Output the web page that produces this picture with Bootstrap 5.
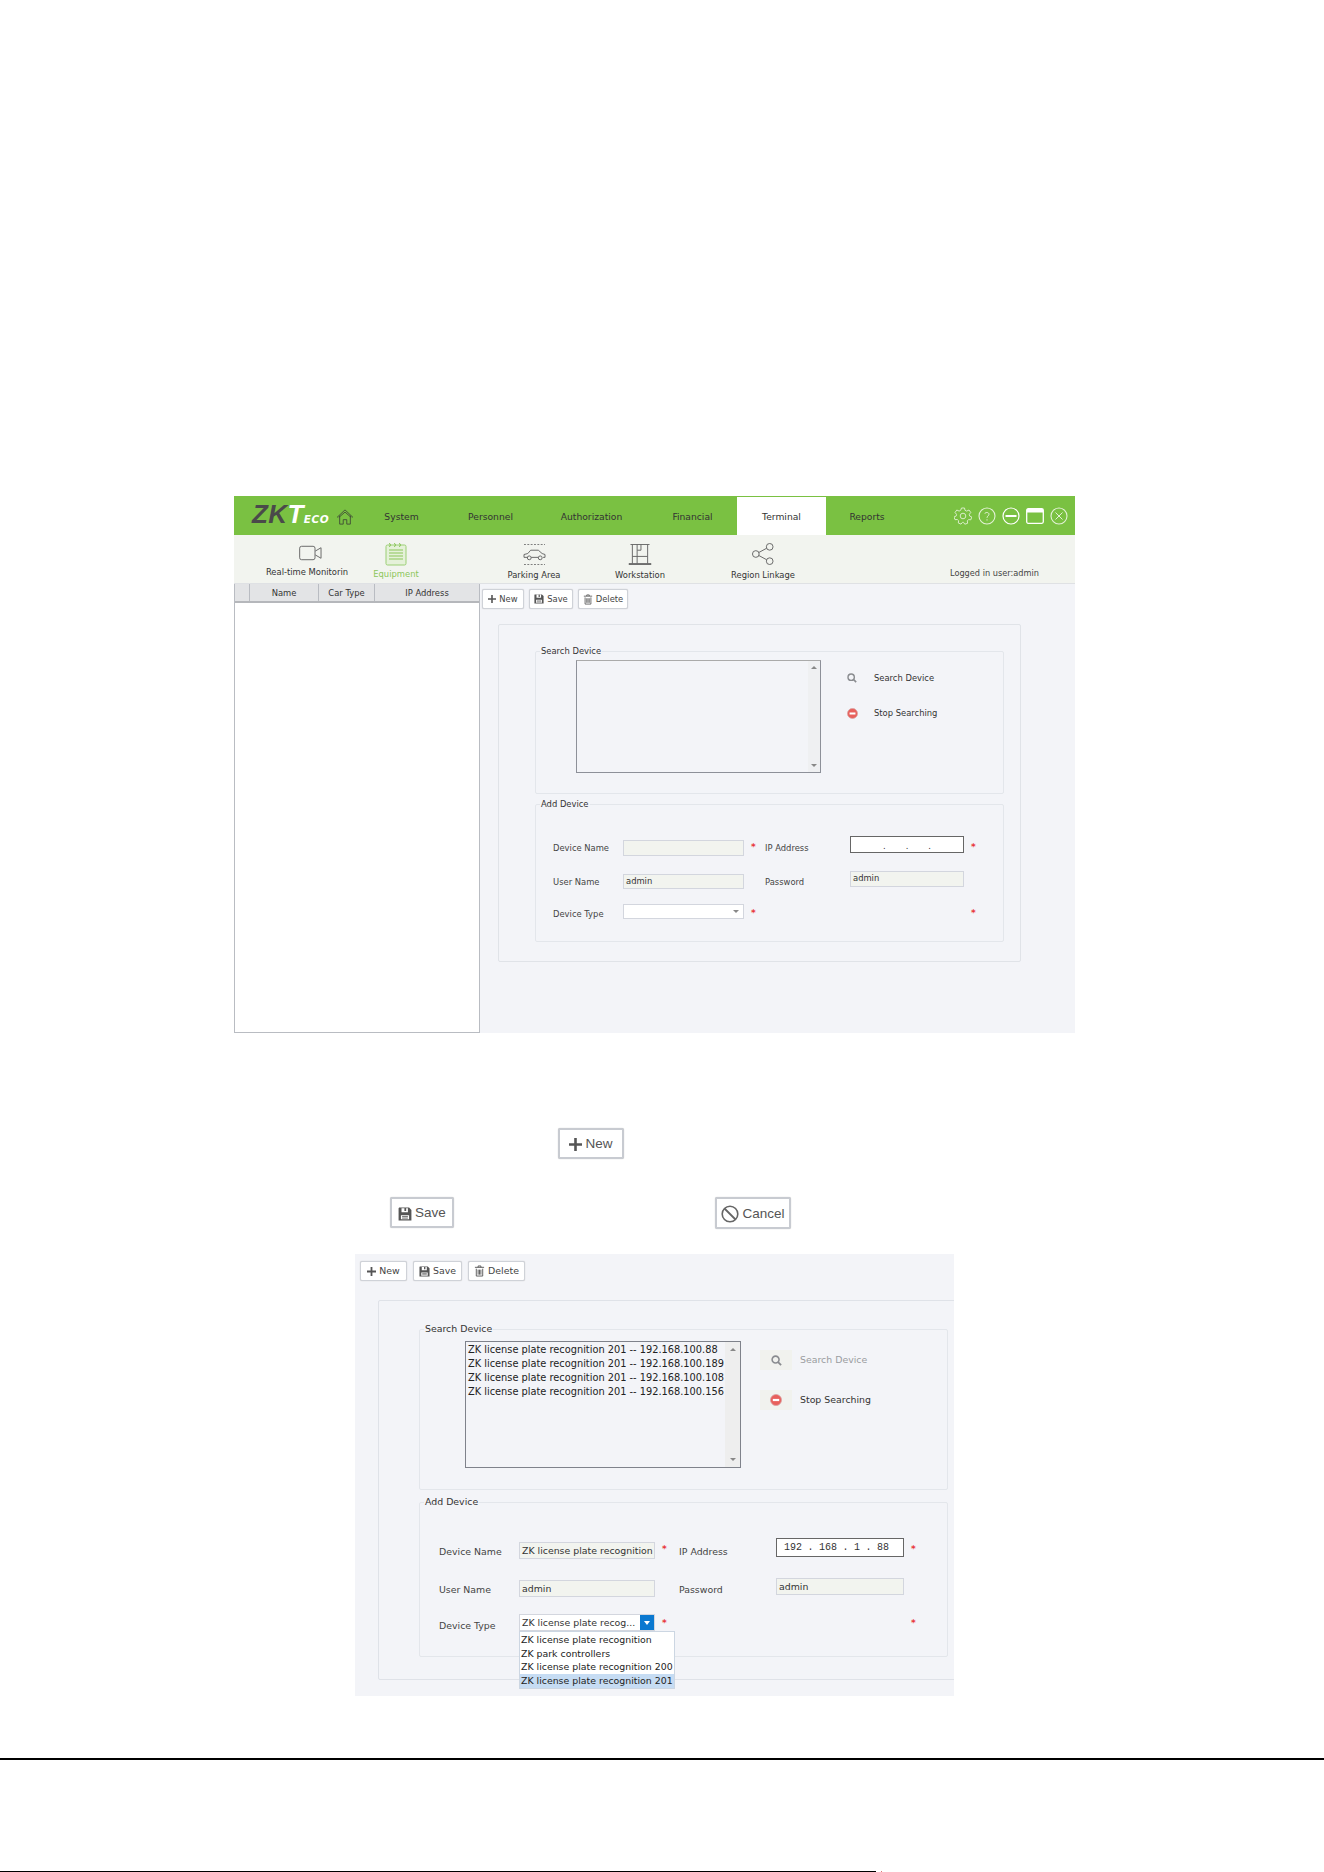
<!DOCTYPE html>
<html lang="en">
<head>
<meta charset="utf-8">
<title>Add device</title>
<link href="https://cdn.jsdelivr.net/npm/bootstrap@5.3.0/dist/css/bootstrap.min.css" rel="stylesheet">
<style>
body{background:#fff;font-family:"DejaVu Sans","Liberation Sans",sans-serif;color:#333;width:1324px;height:1872px;overflow:hidden;margin:0;padding-top:496px;position:relative}
.shot-a{margin-left:234px;width:841px;height:537px;font-size:8.4px;line-height:12px;background:#f3f4f8}
.top-green{height:39px;background:#7ac142}
.logo-wrap{width:123px;padding-left:18px;padding-top:2px;align-items:center;gap:7px}
.logo-txt{font-family:"Liberation Sans",sans-serif;font-weight:700;font-style:italic;font-size:26px;line-height:26px;letter-spacing:.4px;color:#4a4a4a;white-space:nowrap}
.logo-txt i{color:#fff;font-style:italic}
.logo-txt b{color:#fff;font-family:"DejaVu Sans",sans-serif;font-size:10.5px;letter-spacing:.6px;text-transform:uppercase}
.nav-tab{display:flex;align-items:center;justify-content:center;height:39px;color:#333;font-size:9.2px;width:89px;padding-top:2px}
.nav-tab.tab-wide{width:113px}
.nav-tab.tab-short{width:82px}
.nav-tab.tab-on{background:#fff;margin-top:1px;height:38px;padding-top:1px}
.win-icons{margin-left:46px;gap:6px}
.tool-strip{height:49px;background:#f2f4ef;border-bottom:1px solid #dfe1e4;padding-left:30px}
.tool-item{display:flex;flex-direction:column;align-items:center;padding-top:6px;color:#333}
.tool-item span{white-space:nowrap}
.ti1{width:92px}.ti1 span{margin-top:5px;margin-right:6px}
.ti2{width:80px;color:#8cc65a;padding-top:7px}.ti2 span{margin-top:2px}
.ti3{width:100px;margin-left:48px;padding-top:9px}.ti3 span{margin-top:4px}
.ti4{width:100px;margin-left:6px;padding-top:9px}.ti4 span{margin-top:4px}
.ti5{width:100px;margin-left:23px;padding-top:8px}.ti5 span{margin-top:4px}
.logged{margin-left:137px;padding-top:32px;color:#444;font-size:8.2px;white-space:nowrap}
.pane-left{width:246px;height:449px;background:#fff;border:1px solid #b9bcc2;border-top:0}
.grid-head{height:19px;background:#e3e4e6;border-bottom:2px solid #b5b7bb;text-align:center;line-height:18px}
.grid-head div{border-right:1px solid #b9bcc2}
.gh0{width:15px}.gh1{width:69px}.gh2{width:56px}.gh3{flex:1;border-right:0!important}
.tool-btn{--bs-btn-padding-x:0;--bs-btn-padding-y:0;--bs-btn-border-radius:2px;--bs-btn-font-size:8.4px;background:#fff;border:1px solid #cfd2d8;color:#444;display:inline-flex;align-items:center;justify-content:center;gap:3px;box-shadow:0 0 1px #bbb}
.row-a{padding:5px 0 0 2px;gap:5px}
.b-new-a{width:42px;height:20px}.b-save-a{width:44px;height:20px}.b-del-a{width:50px;height:20px}
.box-a{margin:15px 0 0 18px;width:523px;height:338px;border:1px solid #e0e3e8;border-radius:2px;padding:20px 0 0 36px}
.fs{border:1px solid #e3e6eb;border-radius:2px;margin:0;padding:0;min-width:0}
.fs legend{float:none;width:auto;margin:0 0 0 4px;padding:0 1px;color:#333}
.fs-a{width:469px}.fs-a legend{font-size:8.4px;line-height:12px}
.fs-a1-in{padding:3px 0 20px 40px}
.fs-a2{margin-top:4px;height:144px}
.list-a{width:245px;height:113px;background:#f3f4f8;border:1px solid #8d9099;border-top-color:#aaa}
.sbar{background:#eeeeee;display:flex;flex-direction:column;justify-content:space-between;align-items:center;padding:6px 0}
.sbar-a{width:12px;margin-left:auto;padding:5px 0;background:#eff0f2}
.tri-up{width:0;height:0;border:3px solid transparent;border-top:0;border-bottom:3px solid #888}
.tri-dn{width:0;height:0;border:3px solid transparent;border-bottom:0;border-top:3px solid #888}
.acts-a{margin-left:26px;padding-top:9px}
.act{display:flex;align-items:center}
.act-a1{height:18px;gap:17px;white-space:nowrap}
.act-a2{height:18px;margin-top:17px;gap:16px;white-space:nowrap}
.frm{display:grid;align-items:start}
.frm-a{grid-template-columns:70px 121px 21px 85px 114px 20px;grid-template-rows:35px 33px 24px;margin:26px 0 0 17px}
.fld{background:#f2f4ef;border:1px solid #d3d6de;padding-left:2px;overflow:hidden;white-space:nowrap}
.fa-lbl{color:#444;line-height:12px}
.fa-n{height:16px}.fa-u{height:15px}.fa-p{height:16px}
.fa-ip{height:17px;background:#fff;border:1px solid #666;display:flex;justify-content:space-around;padding:0 22px;color:#333;align-items:flex-end;line-height:12px}
.fa-sel{height:15px;background:#fff;border:1px solid #d3d6de;display:flex;justify-content:flex-end;align-items:center;padding-right:4px}
.req{color:#e8363a;font-size:9px;font-weight:700;line-height:12px}
.req-a{margin-left:7px}
.o2{margin-top:2px}.o3{margin-top:3px}.o4{margin-top:4px}.o5{margin-top:5px}.o6{margin-top:6px}.o7{margin-top:7px}

.row-new{margin:95px 0 0 558px}
.b-big{--bs-btn-font-size:13.500px;color:#555;gap:3px;font-family:"Liberation Sans",sans-serif;border-color:#c8cbd1;border-width:2px;height:31px;padding-top:2px}
.b-n{width:66px}.b-s{width:64px}.b-c{width:76px;height:32px;margin-left:261px}
.row-save{margin:38px 0 0 390px}

.shot-b{margin:25px 0 0 355px;width:599px;height:442px;background:#f3f4f8;font-size:9.4px;line-height:14px;overflow:hidden;position:relative;color:#333}
.row-b{padding:7px 0 0 5px;gap:6px}
.tool-btn.fb{--bs-btn-font-size:9.4px;height:20px}
.b-new-b{width:47px}.b-save-b{width:49px}.b-del-b{width:57px}
.box-b{margin:19px 0 0 23px;width:640px;height:380px;border:1px solid #dfe2e8;border-radius:2px;padding:21px 0 0 40px}
.fs-b{width:529px}.fs-b legend{font-size:9.4px;line-height:14px}
.fs-b1-in{padding:5px 0 21px 45px}
.fs-b2{margin-top:5px;height:162px}
.list-b{width:276px;height:127px;border:1px solid #7f828b;background:#f3f4f8}
.list-lines{padding:1px 0 0 2px;font-size:9.800px;line-height:14px;color:#222;white-space:nowrap;flex:1;overflow:hidden}
.sbar-b{width:15px;padding:6px 0;flex:none}
.acts-b{margin-left:19px;padding-top:9px}
.act-b1{height:20px;color:#9a9ca0;white-space:nowrap}
.act-b2{height:20px;margin-top:20px;white-space:nowrap}
.ico-box{width:32px;height:20px;background:#f1f2ee;display:flex;align-items:center;justify-content:center;margin-right:8px}
.frm-b{grid-template-columns:80px 136px 24px 97px 128px 20px;grid-template-rows:40px 36px 24px;margin:29px 0 0 19px}
.fb-lbl{color:#444}
.fb-in{height:17px;line-height:15px;font-size:9.4px;padding-left:2px}
.fb-ip{height:19px;background:#fff;border:1px solid #666;display:flex;justify-content:space-between;align-items:center;padding:0 14px 0 7px;font-family:"Liberation Mono",monospace;font-size:10px}
.fb-sel{height:17px;background:#fff;border:1px solid #d3d6de;display:flex;align-items:center;padding-left:2px;white-space:nowrap}
.fb-sel span{flex:1;overflow:hidden}
.sel-arrow{width:14px;height:100%;background:#0a78d0;display:flex;align-items:center;justify-content:center;flex:none}
.tri-w{width:0;height:0;border:3px solid transparent;border-bottom:0;border-top:4px solid #fff}
.drop-b{position:absolute;left:164px;top:377px;width:156px;height:58px;background:#fff;border:1px solid #ccd6e2;line-height:13.7px;white-space:nowrap;color:#222;padding-top:1px}
.drop-b div{padding-left:1px;height:13.7px}
.drop-b .drop-on{background:#c6dcf3}
.rule-1{height:2px;background:#000;margin-top:62px;opacity:1;border:0}
.rule-2{position:absolute;left:0;top:1871px;width:876px;height:1px;background:#000}
.dot-red{position:absolute;left:881px;top:1871px;width:1px;height:1px;background:#d77}
svg{display:block;flex:none}
</style>
</head>
<body>
<svg width="0" height="0" class="position-absolute">
<defs>
<symbol id="i-plus" viewBox="0 0 10 10"><path d="M4 0h2v4h4v2H6v4H4V6H0V4h4z" fill="#555"/></symbol>
<symbol id="i-save" viewBox="0 0 12 12"><path d="M1 .5h8.500l2 2V11.500H.5V1z M3 1v3.500h5.500V1H7v2.500H5.500V1z M2.500 7v3.500h7V7z" fill="#555" fill-rule="evenodd"/><path d="M3.500 8.200h5M3.500 9.500h5" stroke="#555" stroke-width=".7"/></symbol>
<symbol id="i-trash" viewBox="0 0 12 13"><path d="M1 2.500h10M4.500 2.500V1h3v1.500M2.500 4v8h7V4M4.500 5v5.500M6 5v5.500M7.500 5v5.500" fill="none" stroke="#555"/></symbol>
<symbol id="i-search" viewBox="0 0 12 12"><circle cx="5" cy="5" r="3.800" fill="none" stroke="#8a8c90" stroke-width="1.700"/><path d="M7.500 7.500l3.500 3.500" stroke="#8a8c90" stroke-width="2"/></symbol>
<symbol id="i-stop" viewBox="0 0 12 12"><circle cx="6" cy="6" r="5.500" fill="#e8605c" stroke="#d9a0a0" stroke-width=".8"/><rect x="2.800" y="4.900" width="6.400" height="2.200" fill="#fff"/></symbol>
<symbol id="i-ban" viewBox="0 0 18 18"><circle cx="9" cy="9" r="7.800" fill="none" stroke="#666" stroke-width="1.600"/><path d="M3.500 3.500l11 11" stroke="#666" stroke-width="1.800"/></symbol>
<symbol id="i-home" viewBox="0 0 20 18"><path d="M1 9.500L10 1l9 8.500M4 7.500V17h4v-5h4v5h4V7.500M3 9.500L10 3.500l7 6" fill="none" stroke="#3f4a36" stroke-width="1"/></symbol>
<symbol id="i-cam" viewBox="0 0 24 16"><rect x=".7" y="1" width="16" height="14" rx="2" fill="none" stroke="#666" stroke-width="1"/><path d="M17 6l6-3.500v11L17 10" fill="none" stroke="#666"/></symbol>
<symbol id="i-note" viewBox="0 0 22 24"><rect x="1" y="3" width="20" height="20" rx="1.500" fill="#e5f1d9" stroke="#9bcf74"/><path d="M4 1.500a1.500 1.500 0 1 1 0 3M9 1.500a1.500 1.500 0 1 1 0 3M14 1.500a1.500 1.500 0 1 1 0 3" fill="none" stroke="#8cc65a"/><path d="M4 8h14M4 11h14M4 14h14M4 17h14" stroke="#8cc65a" stroke-width="1.200"/></symbol>
<symbol id="i-car" viewBox="0 0 24 22"><path d="M1 .5h22M1 21.500h22" stroke="#777" stroke-dasharray="2 1.500"/><path d="M1 14v-3l4-1 3-3.500h8l4 3.500 3 1v3h-2M5 14H1M8.500 14h7.500" fill="none" stroke="#666"/><circle cx="6.500" cy="14.500" r="2" fill="none" stroke="#666"/><circle cx="18" cy="14.500" r="2" fill="none" stroke="#666"/></symbol>
<symbol id="i-work" viewBox="0 0 24 22"><path d="M.5 20.500h23v1H.5zM4 20.500V.5M20 20.500V.5M2 .5h20M9 .5v6M13 .5v6M9 6.500h4M9 6.500v14M4 13h16" fill="none" stroke="#666"/></symbol>
<symbol id="i-share" viewBox="0 0 24 23"><circle cx="4.500" cy="11.500" r="3.500" fill="none" stroke="#666"/><circle cx="19" cy="4" r="3.500" fill="none" stroke="#666"/><circle cx="19" cy="19" r="3.500" fill="none" stroke="#666"/><path d="M7.500 10l8.300-4.500M7.500 13l8.300 4.500" stroke="#666"/></symbol>
<symbol id="i-gear" viewBox="0 0 18 18"><circle cx="9" cy="9" r="2.800" fill="none" stroke="#d9ecc8"/><path d="M7.500 1h3l.5 2.300 1.700.8L15 3l1.800 2.500-1.500 1.800.3 1.700 2.200 1-1 2.800-2.300-.2-1.200 1.300.3 2.400-2.800.9-1.300-1.900H8.500L7 17.100 4.300 16l.3-2.300-1.300-1.200-2.300.2L0 10l2.200-1 .3-1.700L1 5.500 2.800 3l2.300 1.100L6.700 3.300z" fill="none" stroke="#d9ecc8"/></symbol>
<symbol id="i-q" viewBox="0 0 18 18"><circle cx="9" cy="9" r="8" fill="none" stroke="#e3f1d6" stroke-width="1.100"/><path d="M6.800 6.800C7 5 11 5 11 7.200c0 1.600-2 1.800-2 3.600M9 12.300v1.200" fill="none" stroke="#e3f1d6"/></symbol>
<symbol id="i-min" viewBox="0 0 18 18"><circle cx="9" cy="9" r="8" fill="none" stroke="#fff" stroke-width="1.200"/><rect x="3.500" y="8" width="11" height="2" fill="#fff"/></symbol>
<symbol id="i-max" viewBox="0 0 18 16"><rect x=".7" y=".7" width="16.600" height="14.600" rx="1.500" fill="none" stroke="#fff" stroke-width="1.300"/><rect x="1" y="1" width="16" height="3.500" fill="#fff"/></symbol>
<symbol id="i-x" viewBox="0 0 18 18"><circle cx="9" cy="9" r="8" fill="none" stroke="#e3f1d6" stroke-width="1.100"/><path d="M5.500 5.500l7 7M12.500 5.500l-7 7" stroke="#e3f1d6"/></symbol>
</defs>
</svg>

<section class="shot-a">
  <header class="top-green d-flex">
    <div class="logo-wrap d-flex">
      <span class="logo-txt">ZK<i>T</i><b>eco</b></span>
      <svg width="18" height="16"><use href="#i-home"/></svg>
    </div>
    <nav class="d-flex">
      <a class="nav-tab text-decoration-none">System</a>
      <a class="nav-tab text-decoration-none">Personnel</a>
      <a class="nav-tab tab-wide text-decoration-none">Authorization</a>
      <a class="nav-tab text-decoration-none">Financial</a>
      <a class="nav-tab tab-on text-decoration-none">Terminal</a>
      <a class="nav-tab tab-short text-decoration-none">Reports</a>
    </nav>
    <div class="win-icons d-flex align-items-center">
      <svg width="18" height="18"><use href="#i-gear"/></svg>
      <svg width="18" height="18"><use href="#i-q"/></svg>
      <svg width="18" height="18"><use href="#i-min"/></svg>
      <svg width="18" height="16"><use href="#i-max"/></svg>
      <svg width="18" height="18"><use href="#i-x"/></svg>
    </div>
  </header>
  <div class="tool-strip d-flex">
    <div class="tool-item ti1"><svg width="23" height="16" class="mt-1"><use href="#i-cam"/></svg><span>Real-time Monitorin</span></div>
    <div class="tool-item ti2"><svg width="22" height="24"><use href="#i-note"/></svg><span>Equipment</span></div>
    <div class="tool-item ti3"><svg width="23" height="21"><use href="#i-car"/></svg><span>Parking Area</span></div>
    <div class="tool-item ti4"><svg width="24" height="21"><use href="#i-work"/></svg><span>Workstation</span></div>
    <div class="tool-item ti5"><svg width="24" height="22"><use href="#i-share"/></svg><span>Region Linkage</span></div>
    <div class="logged">Logged in user:admin</div>
  </div>
  <div class="d-flex">
    <aside class="pane-left">
      <div class="grid-head d-flex"><div class="gh0"></div><div class="gh1">Name</div><div class="gh2">Car Type</div><div class="gh3">IP Address</div></div>
    </aside>
    <main class="flex-grow-1">
      <div class="row-a d-flex">
        <button class="btn tool-btn b-new-a"><svg width="8" height="8"><use href="#i-plus"/></svg>New</button>
        <button class="btn tool-btn b-save-a"><svg width="10" height="10"><use href="#i-save"/></svg>Save</button>
        <button class="btn tool-btn b-del-a"><svg width="10" height="11"><use href="#i-trash"/></svg>Delete</button>
      </div>
      <div class="box-a">
        <fieldset class="fs fs-a">
          <legend>Search Device</legend>
          <div class="d-flex fs-a1-in">
            <div class="list-a d-flex"><div class="sbar sbar-a"><i class="tri-up"></i><i class="tri-dn"></i></div></div>
            <div class="acts-a">
              <div class="act act-a1"><svg width="10" height="10"><use href="#i-search"/></svg><span>Search Device</span></div>
              <div class="act act-a2"><svg width="11" height="11"><use href="#i-stop"/></svg><span>Stop Searching</span></div>
            </div>
          </div>
        </fieldset>
        <fieldset class="fs fs-a fs-a2">
          <legend>Add Device</legend>
          <div class="frm frm-a">
            <div class="fa-lbl o6">Device Name</div><div class="fld fa-n o4"></div><div class="req req-a o5">*</div><div class="fa-lbl o6">IP Address</div><div class="fa-ip"><span>.</span><span>.</span><span>.</span></div><div class="req req-a o5">*</div>
            <div class="fa-lbl o5">User Name</div><div class="fld fa-u o3">admin</div><div></div><div class="fa-lbl o5">Password</div><div class="fld fa-p">admin</div><div></div>
            <div class="fa-lbl o4">Device Type</div><div class="fa-sel"><i class="tri-dn"></i></div><div class="req req-a o3">*</div><div></div><div></div><div class="req req-a o3">*</div>
          </div>
        </fieldset>
      </div>
    </main>
  </div>
</section>

<div class="row-new d-flex"><button class="btn tool-btn b-big b-n"><svg width="13" height="13"><use href="#i-plus"/></svg>New</button></div>
<div class="row-save d-flex">
  <button class="btn tool-btn b-big b-s"><svg width="14" height="16"><use href="#i-save"/></svg>Save</button>
  <button class="btn tool-btn b-big b-c"><svg width="18" height="18"><use href="#i-ban"/></svg>Cancel</button>
</div>

<section class="shot-b">
  <div class="row-b d-flex">
    <button class="btn tool-btn fb b-new-b"><svg width="9" height="9"><use href="#i-plus"/></svg>New</button>
    <button class="btn tool-btn fb b-save-b"><svg width="11" height="11"><use href="#i-save"/></svg>Save</button>
    <button class="btn tool-btn fb b-del-b"><svg width="11" height="12"><use href="#i-trash"/></svg>Delete</button>
  </div>
  <div class="box-b">
    <fieldset class="fs fs-b">
      <legend>Search Device</legend>
      <div class="d-flex fs-b1-in">
        <div class="list-b d-flex">
          <div class="list-lines">
            <div>ZK license plate recognition 201 -- 192.168.100.88</div>
            <div>ZK license plate recognition 201 -- 192.168.100.189</div>
            <div>ZK license plate recognition 201 -- 192.168.100.108</div>
            <div>ZK license plate recognition 201 -- 192.168.100.156</div>
          </div>
          <div class="sbar sbar-b"><i class="tri-up"></i><i class="tri-dn"></i></div>
        </div>
        <div class="acts-b">
          <div class="act act-b1"><span class="ico-box"><svg width="11" height="11"><use href="#i-search"/></svg></span><span>Search Device</span></div>
          <div class="act act-b2"><span class="ico-box"><svg width="12" height="12"><use href="#i-stop"/></svg></span><span>Stop Searching</span></div>
        </div>
      </div>
    </fieldset>
    <fieldset class="fs fs-b fs-b2">
      <legend>Add Device</legend>
      <div class="frm frm-b">
        <div class="fb-lbl o7">Device Name</div><div class="fld fb-in o4">ZK license plate recognition</div><div class="req req-a o5">*</div><div class="fb-lbl o7">IP Address</div><div class="fb-ip"><span>192</span><span>.</span><span>168</span><span>.</span><span>1</span><span>.</span><span>88</span></div><div class="req req-a o5">*</div>
        <div class="fb-lbl o5">User Name</div><div class="fld fb-in o2">admin</div><div></div><div class="fb-lbl o5">Password</div><div class="fld fb-in">admin</div><div></div>
        <div class="fb-lbl o5">Device Type</div><div class="fb-sel"><span>ZK license plate recog...</span><div class="sel-arrow"><i class="tri-w"></i></div></div><div class="req req-a o3">*</div><div></div><div></div><div class="req req-a o3">*</div>
      </div>
    </fieldset>
  </div>
  <div class="drop-b">
    <div>ZK license plate recognition</div>
    <div>ZK park controllers</div>
    <div>ZK license plate recognition 200</div>
    <div class="drop-on">ZK license plate recognition 201</div>
  </div>
</section>

<hr class="rule-1">
<div class="rule-2"></div>
<div class="dot-red"></div>
<script src="https://cdn.jsdelivr.net/npm/bootstrap@5.3.0/dist/js/bootstrap.bundle.min.js"></script>
</body>
</html>
